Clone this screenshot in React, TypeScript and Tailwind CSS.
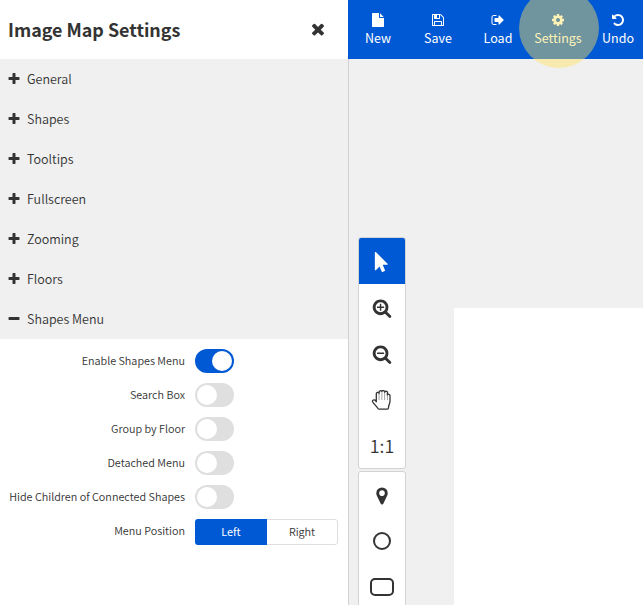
import React from "react";

const paths = {
  plus: "M1600 736v192q0 40-28 68t-68 28h-416v416q0 40-28 68t-68 28h-192q-40 0-68-28t-28-68v-416h-416q-40 0-68-28t-28-68v-192q0-40 28-68t68-28h416v-416q0-40 28-68t68-28h192q40 0 68 28t28 68v416h416q40 0 68 28t28 68z",
  minus: "M1600 736v192q0 40-28 68t-68 28h-1216q-40 0-68-28t-28-68v-192q0-40 28-68t68-28h1216q40 0 68 28t28 68z",
  close: "M1490 1322q0 40-28 68l-136 136q-28 28-68 28t-68-28l-294-294-294 294q-28 28-68 28t-68-28l-136-136q-28-28-28-68t28-68l294-294-294-294q-28-28-28-68t28-68l136-136q28-28 68-28t68 28l294 294 294-294q28-28 68-28t68 28l136 136q28 28 28 68t-28 68l-294 294 294 294q28 28 28 68z",
  cog: "M1152 896q0-106-75-181t-181-75-181 75-75 181 75 181 181 75 181-75 75-181zm512-109v222q0 12-8 23t-20 13l-185 28q-19 54-39 91 35 50 107 138 10 12 10 25t-9 23q-27 37-99 108t-94 71q-12 0-26-9l-138-108q-44 23-91 38-16 136-29 186-7 28-36 28h-222q-14 0-24.5-8.5t-11.5-21.5l-28-184q-49-16-90-37l-141 107q-10 9-25 9-14 0-25-11-126-114-165-168-7-10-7-23 0-12 8-23 15-21 51-66.5t54-70.5q-27-50-41-99l-183-27q-13-2-21-12.5t-8-23.5v-222q0-12 8-23t19-13l186-28q14-46 39-92-40-57-107-138-10-12-10-24 0-10 9-23 26-36 98.5-107.5t94.5-71.5q13 0 26 10l138 107q44-23 91-38 16-136 29-186 7-28 36-28h222q14 0 24.5 8.5t11.5 21.5l28 184q49 16 90 37l142-107q9-9 24-9 13 0 25 10 129 119 165 170 7 8 7 22 0 12-8 23-15 21-51 66.5t-54 70.5q26 50 41 98l183 28q13 2 21 12.5t8 23.5z",
  zoomIn: "M1088 800v64q0 13-9.5 22.5t-22.5 9.5h-224v224q0 13-9.5 22.5t-22.5 9.5h-64q-13 0-22.5-9.5t-9.5-22.5v-224h-224q-13 0-22.5-9.5t-9.5-22.5v-64q0-13 9.5-22.5t22.5-9.5h224v-224q0-13 9.5-22.5t22.5-9.5h64q13 0 22.5 9.5t9.5 22.5v224h224q13 0 22.5 9.5t9.5 22.5zm128 32q0-185-131.5-316.5t-316.5-131.5-316.5 131.5-131.5 316.5 131.5 316.5 316.5 131.5 316.5-131.5 131.5-316.5zm512 832q0 53-37.5 90.5t-90.5 37.5q-54 0-90-38l-343-342q-179 124-399 124-143 0-273.5-55.5t-225-150-150-225-55.5-273.5 55.5-273.5 150-225 225-150 273.5-55.5 273.5 55.5 225 150 150 225 55.5 273.5q0 220-124 399l343 343q37 37 37 90z",
  zoomOut: "M1088 800v64q0 13-9.5 22.5t-22.5 9.5h-576q-13 0-22.5-9.5t-9.5-22.5v-64q0-13 9.5-22.5t22.5-9.5h576q13 0 22.5 9.5t9.5 22.5zm128 32q0-185-131.5-316.5t-316.5-131.5-316.5 131.5-131.5 316.5 131.5 316.5 316.5 131.5 316.5-131.5 131.5-316.5zm512 832q0 53-37.5 90.5t-90.5 37.5q-54 0-90-38l-343-342q-179 124-399 124-143 0-273.5-55.5t-225-150-150-225-55.5-273.5 55.5-273.5 150-225 225-150 273.5-55.5 273.5 55.5 225 150 150 225 55.5 273.5q0 220-124 399l343 343q37 37 37 90z",
  undo: "M1664 896q0 156-61 298t-164 245-245 164-298 61q-172 0-327-72.5t-264-204.5q-7-10-6.5-22.5t8.5-20.5l137-138q10-9 25-9 16 2 23 12 73 95 179 147t225 52q104 0 198.5-40.5t163.5-109.5 109.5-163.5 40.5-198.5-40.5-198.5-109.5-163.5-163.5-109.5-198.5-40.5q-98 0-188 35.5t-160 101.5l137 138q31 30 14 69-17 40-59 40h-448q-26 0-45-19t-19-45v-448q0-42 40-59 39-17 69 14l130 129q107-101 244.5-156.5t284.5-55.5q156 0 298 61t245 164 164 245 61 298z",
  file: "M1152 512v-472q22 14 36 28l408 408q14 14 28 36h-472zm-128 32q0 40 28 68t68 28h544v1056q0 40-28 68t-68 28h-1344q-40 0-68-28t-28-68v-1600q0-40 28-68t68-28h800v544z",
  save: "M512 1536h768v-384h-768v384zm896 0h128v-896q0-14-10-38.5t-20-34.5l-281-281q-10-10-34-20t-39-10v416q0 40-28 68t-68 28h-576q-40 0-68-28t-28-68v-416h-128v1280h128v-416q0-40 28-68t68-28h832q40 0 68 28t28 68v416zm-384-928v-320q0-13-9.5-22.5t-22.5-9.5h-192q-13 0-22.5 9.5t-9.5 22.5v320q0 13 9.5 22.5t22.5 9.5h192q13 0 22.5-9.5t9.5-22.5zm640 32v928q0 40-28 68t-68 28h-1344q-40 0-68-28t-28-68v-1344q0-40 28-68t68-28h928q40 0 88 20t76 48l280 280q28 28 48 76t20 88z",
  load: "M704 1440q0 4 1 20t.5 26.5-3 23.5-10 19.5-20.5 6.5h-320q-119 0-203.5-84.5t-84.5-203.5v-704q0-119 84.5-203.5t203.5-84.5h320q13 0 22.5 9.5t9.5 22.5q0 4 1 20t.5 26.5-3 23.5-10 19.5-20.5 6.5h-320q-66 0-113 47t-47 113v704q0 66 47 113t113 47h312l11.5 1 11.5 3 8 5.5 7 9 2 13.5zm928-544q0 26-19 45l-544 544q-19 19-45 19t-45-19-19-45v-288h-448q-26 0-45-19t-19-45v-384q0-26 19-45t45-19h448v-288q0-26 19-45t45-19 45 19l544 544q19 19 19 45z",
  pointer: "M1389 1043q31 30 14 69-17 40-59 40h-382l201 476q10 25 0 49t-34 35l-177 75q-25 10-49 0t-35-34l-191-452-312 312q-19 19-45 19-12 0-24-5-40-17-40-59v-1504q0-42 40-59 12-5 24-5 27 0 45 19z",
  marker: "M1152 640q0-106-75-181t-181-75-181 75-75 181 75 181 181 75 181-75 75-181zm256 0q0 109-33 179l-364 774q-16 33-47.5 52t-67.5 19-67.5-19-46.5-52l-365-774q-33-70-33-179 0-212 150-362t362-150 362 150 150 362z",
};

function Icon({ name, className }: { name: keyof typeof paths; className: string }) {
  return (
    <svg viewBox="0 0 1792 1792" fill="currentColor" className={`shrink-0 overflow-visible ${className}`}>
      <path d={paths[name]} />
    </svg>
  );
}

const sections = ["General", "Shapes", "Tooltips", "Fullscreen", "Zooming", "Floors", "Shapes Menu"];

const toggles = [
  { label: "Enable Shapes Menu", on: true },
  { label: "Search Box", on: false },
  { label: "Group by Floor", on: false },
  { label: "Detached Menu", on: false },
  { label: "Hide Children of Connected Shapes", on: false },
];

const actions: { label: string; icon: keyof typeof paths }[] = [
  { label: "New", icon: "file" },
  { label: "Save", icon: "save" },
  { label: "Load", icon: "load" },
  { label: "Settings", icon: "cog" },
  { label: "Undo", icon: "undo" },
];

function Tool({ children, active }: { children: React.ReactNode; active?: boolean }) {
  return (
    <div className={`flex h-[46px] w-[46px] shrink-0 items-center justify-center ${active ? "rounded-t-[2px] bg-[#0059d4] text-white" : ""}`}>
      {children}
    </div>
  );
}

function Settings() {
  return (
    <aside className="flex w-[348px] shrink-0 flex-col bg-white">
      <header className="flex h-[59px] items-center justify-between pl-2 pr-[21px]">
        <h1 className="mb-[2px] text-[17.9px] font-bold leading-[20px]">Image Map Settings</h1>
        <Icon name="close" className="mb-[2px] size-[18px]" />
      </header>
      <nav className="bg-[#f0f0f0]">
        {sections.map((s) => (
          <div key={s} className="flex h-10 items-center pl-[6.5px] text-[12.5px] font-[350] leading-[20px]">
            <Icon name={s === "Shapes Menu" ? "minus" : "plus"} className="mr-[6.5px] size-[14px]" />
            <span>{s}</span>
          </div>
        ))}
      </nav>
      <div className="flex flex-col gap-[10px] pt-[10px] text-[10.8px] font-[350] leading-[20px]">
        {toggles.map((t) => (
          <div key={t.label} className="flex h-6 items-center">
            <span className="mb-[2px] w-[185px] whitespace-nowrap text-right">{t.label}</span>
            <span className={`ml-[10px] flex h-6 w-[39px] items-center rounded-full px-[2px] ${t.on ? "justify-end bg-[#0059d4]" : "bg-[#dfdfdf]"}`}>
              <span className="size-5 rounded-full bg-white" />
            </span>
          </div>
        ))}
        <div className="flex h-[26px] items-start">
          <span className="mt-px w-[185px] text-right">Menu Position</span>
          <div className="ml-[10px] flex h-[26px] w-[143px] overflow-hidden rounded-[3px]">
            <span className="flex w-[72px] items-center justify-center bg-[#0059d4] pb-[2px] font-normal text-white">Left</span>
            <span className="flex flex-1 items-center justify-center rounded-r-[3px] border border-l-0 border-[#dfdfdf] pb-[2px]">Right</span>
          </div>
        </div>
      </div>
    </aside>
  );
}

export default function App() {
  return (
    <div className="flex h-[605px] w-[643px] overflow-hidden bg-[#f0f0f0] font-['Noto_Sans_CJK_SC',sans-serif] text-[#333]">
      <Settings />
      <main className="flex min-w-0 flex-1 flex-col">
        <div className="relative flex h-[59px] shrink-0 bg-[#0059d4] text-white">
          {actions.map((a) => (
            <button key={a.label} className="flex w-[60px] shrink-0 flex-col items-center pt-[13px] text-[12.5px] leading-[20px]">
              <Icon name={a.icon} className="size-[14px]" />
              <span className="mt-px">{a.label}</span>
            </button>
          ))}
          <span className="absolute left-[170.5px] top-[-12.5px] size-20 rounded-full bg-[rgba(255,226,88,0.44)]" />
        </div>
        <div className="flex min-h-0 flex-1 border-l border-[#d3d3d3]">
          <div className="ml-[9px] mt-[178px] flex w-12 shrink-0 flex-col gap-[2px]">
            <div className="shrink-0 rounded-[3px] border border-[#d3d3d3] bg-white">
              <Tool active><Icon name="pointer" className="mt-[2px] size-5" /></Tool>
              <Tool><Icon name="zoomIn" className="mt-[2px] size-5" /></Tool>
              <Tool><Icon name="zoomOut" className="mt-[2px] size-5" /></Tool>
              <Tool>
                <svg viewBox="0 0 20 20" className="mr-[2px] mt-[2px] size-5" fill="none" stroke="currentColor" strokeWidth="1.3" strokeLinejoin="round" strokeLinecap="round">
                  <path d="M5.3 11.8V4a1.5 1.5 0 0 1 2.8-.9V2.2a1.5 1.5 0 0 1 2.7-.9 1.5 1.5 0 0 1 2.8.9 1.5 1.5 0 0 1 2.8 1.2v1.5a1.4 1.4 0 0 1 2.6.9v5.7c0 2-1.5 3.7-1.5 6 0 .9-.4 1.7-1.2 1.7H8.1c-.7 0-1.1-.5-1.5-1.2-1.5-2.5-3.7-3.9-5-6.2-.8-1.5 1.7-2.8 2.8-1.3z" />
                  <path strokeWidth=".45" d="M8.1 3v6.7M10.9 2v7.7M13.6 2.5v7.2M16.4 4.5v5.2" />
                </svg>
              </Tool>
              <Tool><span className="text-[17.9px] font-[350] leading-[20px]">1:1</span></Tool>
            </div>
            <div className="shrink-0 rounded-[3px] border border-[#d3d3d3] bg-white">
              <Tool><Icon name="marker" className="mt-[2px] size-5" /></Tool>
              <Tool><span className="size-[18px] rounded-full border-2 border-[#333]" /></Tool>
              <Tool><span className="h-[18px] w-6 rounded-[5px] border-2 border-[#333]" /></Tool>
            </div>
          </div>
          <div className="ml-12 mt-[249px] flex-1 bg-white" />
        </div>
      </main>
    </div>
  );
}
